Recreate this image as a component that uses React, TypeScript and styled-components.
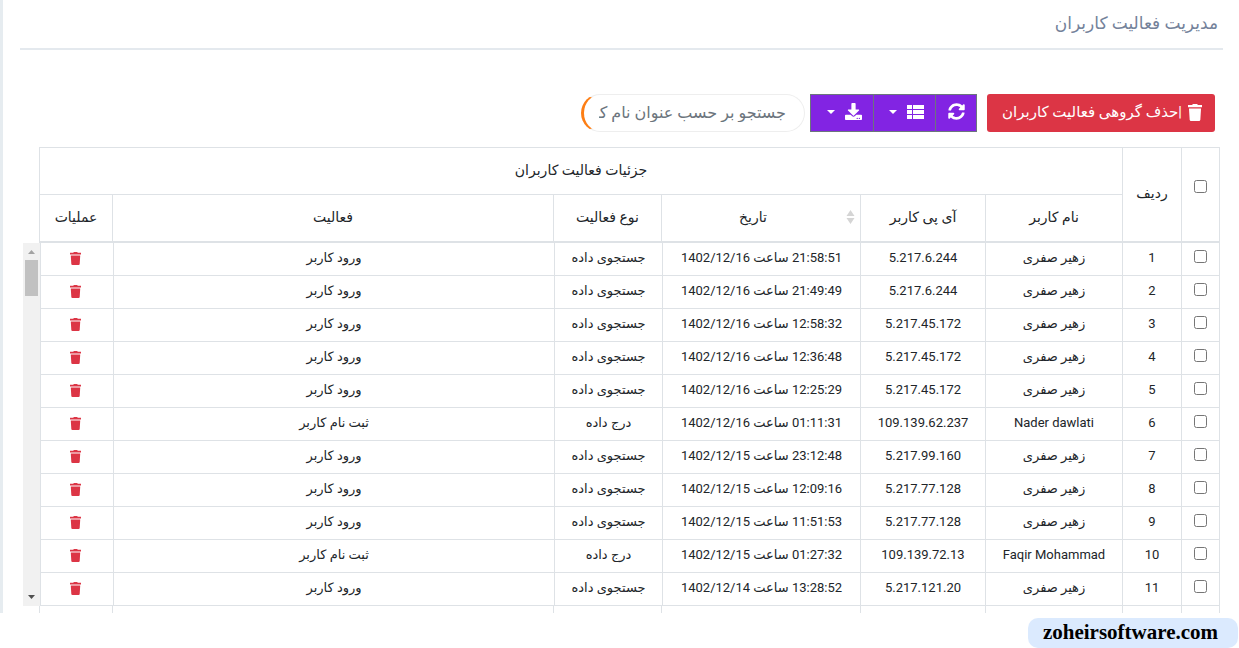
import React from 'react';
import styled, { createGlobalStyle } from 'styled-components';
import { FaDownload, FaSyncAlt } from 'react-icons/fa';

const line = '#dee2e6';
const purple = '#8224e3';

const GlobalStyle = createGlobalStyle`
  *, *::before, *::after { box-sizing: border-box; }
  body {
    margin: 0;
    background: #fff;
    color: #212529;
    font-family: Roboto, 'DejaVu Sans', sans-serif;
    font-size: 13px;
  }
`;

const Page = styled.div`
  direction: rtl;
  height: 100vh;
  display: flex;
  flex-direction: column;
`;

const Main = styled.main`
  flex: 1;
  min-height: 0;
  overflow: hidden;
  border-left: 3px solid #e6ecf0;
  padding: 0 16px 0 17px;
`;

const Title = styled.h1`
  margin: 0;
  height: 50px;
  padding-right: 5px;
  border-bottom: 2px solid #e4e9ee;
  font-size: 17px;
  line-height: 46px;
  font-weight: 400;
  color: #74829a;
`;

const Toolbar = styled.div`
  display: flex;
  align-items: center;
  margin-top: 44px;
  padding-right: 8px;
  height: 38px;
`;

const DeleteButton = styled.button`
  display: flex;
  align-items: center;
  gap: 6px;
  width: 228px;
  height: 38px;
  padding: 0 13px 2px 0;
  border: 0;
  border-radius: 3px;
  background: #dc3545;
  color: #fff;
  font: inherit;
  font-size: 15px;
  white-space: nowrap;
`;

const ButtonGroup = styled.div`
  display: flex;
  margin: 0 10px 0 5px;
  height: 38px;
  border: 1px solid #6c757d;
`;

const ToolButton = styled.button<{ $w: number }>`
  display: flex;
  align-items: center;
  justify-content: center;
  gap: 10px;
  width: ${(p) => p.$w}px;
  padding: 0 0 3px;
  border: 0;
  background: ${purple};
  color: #fff;
  font-size: 17px;
  & + & {
    padding-left: 4px;
    border-right: 1px solid #6c757d;
  }
`;

const Caret = styled.span`
  border: 4px solid transparent;
  border-top-color: #fff;
  border-bottom: 0;
`;

const Search = styled.input`
  width: 224px;
  height: 38px;
  padding: 0 18px 2px 15px;
  border: 1px solid #eee;
  border-left: 3px solid #fd7e14;
  border-radius: 20px;
  background: #fff;
  font: inherit;
  font-size: 16px;
  &::placeholder { color: #6c757d; opacity: 1; }
`;

const Tables = styled.div`
  margin: 15px 3px 0;
`;

const Grid = styled.table`
  width: 100%;
  table-layout: fixed;
  border-collapse: separate;
  border-spacing: 0;
  border-right: 1px solid ${line};
  text-align: center;
`;

const HeadArea = styled.div`
  margin-left: 16px;
`;

const HeadCell = styled.th<{ $last?: boolean; $check?: boolean; $sort?: boolean }>`
  position: relative;
  height: 48px;
  padding: 0 ${(p) => (p.$sort ? 16 : 0)}px ${(p) => (p.$check ? 16 : 3)}px 0;
  border-left: 1px solid ${line};
  border-bottom: ${(p) => (p.$last ? 2 : 1)}px solid ${line};
  font-size: 14px;
  font-weight: 400;
  white-space: nowrap;
  tr:first-child > & { border-top: 1px solid ${line}; }
`;

const SortMark = styled.svg`
  position: absolute;
  right: 5px;
  top: 15px;
`;

const ScrollArea = styled.div`
  display: flex;
`;

const Cell = styled.td<{ $check?: boolean }>`
  height: 33px;
  padding: 0 0 ${(p) => (p.$check ? 6 : 2)}px;
  border-left: 1px solid ${line};
  border-bottom: 1px solid ${line};
  line-height: 20px;
  white-space: nowrap;
`;

const FootCell = styled.td`
  height: 33px;
  border-left: 1px solid ${line};
`;

const Check = styled.input`
  display: block;
  width: 13px;
  height: 13px;
  margin: 0 auto;
`;

const RowDelete = styled.button`
  display: flex;
  margin: 0 auto;
  padding: 0 4px 0 0;
  border: 0;
  background: none;
  color: #dc3545;
`;

const Track = styled.div`
  display: flex;
  flex-direction: column;
  align-items: center;
  width: 17px;
  background: #f1f1f1;
`;

const TrackArrow = styled.svg`
  flex: none;
`;

const Thumb = styled.div`
  width: 13px;
  height: 36px;
  margin-bottom: auto;
  background: #c1c1c1;
`;

const Footer = styled.footer`
  display: flex;
  justify-content: flex-start;
  height: 35px;
  padding: 5px 1px 0;
`;

const SiteLink = styled.a`
  width: 210px;
  height: 30px;
  border-radius: 10px;
  background: #dbeafe;
  color: #000;
  font-family: 'Liberation Serif', serif;
  font-size: 21px;
  font-weight: 700;
  line-height: 28px;
  text-align: center;
  padding-right: 5px;
  text-decoration: none;
`;

const TrashIcon = ({ width, height }: { width: number; height: number }) => (
  <svg width={width} height={height} viewBox="0 0 14 17" preserveAspectRatio="none" fill="currentColor">
    <path d="M4.500 0h5v1H14v2.200H0V1h4.500z" />
    <path d="M1 4.500h12l-.7 11.200q-.1 1.300-1.300 1.300H3q-1.200 0-1.300-1.300z" />
  </svg>
);

const ListIcon = () => (
  <svg width="17" height="14" viewBox="0 0 17 14" fill="currentColor">
    <path d="M0 0h5v4H0zM6 0h11v4H6zM0 5h5v4H0zM6 5h11v4H6zM0 10h5v4H0zM6 10h11v4H6z" />
  </svg>
);

const people = 'زهیر صفری';
const login = 'ورود کاربر';
const signup = 'ثبت نام کاربر';
const lookup = 'جستجوی داده';
const insert = 'درج داده';

const rows = [
  [people, '5.217.6.244', '1402/12/16', '21:58:51', lookup, login],
  [people, '5.217.6.244', '1402/12/16', '21:49:49', lookup, login],
  [people, '5.217.45.172', '1402/12/16', '12:58:32', lookup, login],
  [people, '5.217.45.172', '1402/12/16', '12:36:48', lookup, login],
  [people, '5.217.45.172', '1402/12/16', '12:25:29', lookup, login],
  ['Nader dawlati', '109.139.62.237', '1402/12/16', '01:11:31', insert, signup],
  [people, '5.217.99.160', '1402/12/15', '23:12:48', lookup, login],
  [people, '5.217.77.128', '1402/12/15', '12:09:16', lookup, login],
  [people, '5.217.77.128', '1402/12/15', '11:51:53', lookup, login],
  ['Faqir Mohammad', '109.139.72.13', '1402/12/15', '01:27:32', insert, signup],
  [people, '5.217.121.20', '1402/12/14', '13:28:52', lookup, login],
];

const Col = styled.col<{ $w?: number }>`
  width: ${(p) => (p.$w ? `${p.$w}px` : 'auto')};
`;

const Columns = ({ date }: { date: number }) => (
  <colgroup>
    <Col $w={38} />
    <Col $w={59} />
    <Col $w={137} />
    <Col $w={125} />
    <Col $w={date} />
    <Col $w={108} />
    <Col />
    <Col $w={73} />
  </colgroup>
);

export default function App() {
  return (
    <Page lang="fa">
      <GlobalStyle />
      <Main>
        <Title>مدیریت فعالیت کاربران</Title>
        <Toolbar>
          <DeleteButton type="button">
            <TrashIcon width={14} height={17} />
            <span>|حذف گروهی فعالیت کاربران</span>
          </DeleteButton>
          <ButtonGroup>
            <ToolButton type="button" $w={40} aria-label="بازخوانی"><FaSyncAlt /></ToolButton>
            <ToolButton type="button" $w={62} aria-label="ستون‌ها"><ListIcon /><Caret /></ToolButton>
            <ToolButton type="button" $w={63} aria-label="خروجی"><FaDownload /><Caret /></ToolButton>
          </ButtonGroup>
          <Search type="text" aria-label="جستجو" placeholder="جستجو بر حسب عنوان نام کاربر" />
        </Toolbar>
        <Tables>
          <HeadArea>
            <Grid>
              <Columns date={199} />
              <thead>
                <tr>
                  <HeadCell rowSpan={2} $last $check><Check type="checkbox" aria-label="انتخاب همه" /></HeadCell>
                  <HeadCell rowSpan={2} $last>ردیف</HeadCell>
                  <HeadCell colSpan={6}>جزئیات فعالیت کاربران</HeadCell>
                </tr>
                <tr>
                  <HeadCell $last>نام کاربر</HeadCell>
                  <HeadCell $last>آی پی کاربر</HeadCell>
                  <HeadCell $last $sort>
                    تاریخ
                    <SortMark width="9" height="14" viewBox="0 0 9 14" fill="#d5d5d5">
                      <path d="M4.500 0 8.500 6H.5zM4.500 14 .5 8h8z" />
                    </SortMark>
                  </HeadCell>
                  <HeadCell $last>نوع فعالیت</HeadCell>
                  <HeadCell $last>فعالیت</HeadCell>
                  <HeadCell $last>عملیات</HeadCell>
                </tr>
              </thead>
            </Grid>
          </HeadArea>
          <ScrollArea>
            <Grid>
              <Columns date={198} />
              <tbody>
                {rows.map(([name, ip, day, time, kind, activity], i) => (
                  <tr key={i}>
                    <Cell $check><Check type="checkbox" aria-label={`ردیف ${i + 1}`} /></Cell>
                    <Cell>{i + 1}</Cell>
                    <Cell>{name}</Cell>
                    <Cell>{ip}</Cell>
                    <Cell>{time} ساعت {day}</Cell>
                    <Cell>{kind}</Cell>
                    <Cell>{activity}</Cell>
                    <Cell><RowDelete type="button" aria-label="حذف"><TrashIcon width={11} height={13} /></RowDelete></Cell>
                  </tr>
                ))}
              </tbody>
            </Grid>
            <Track>
              <TrackArrow width="17" height="17" viewBox="0 0 17 17" fill="#a3a3a3"><path d="M5 11 8.500 7 12 11z" /></TrackArrow>
              <Thumb />
              <TrackArrow width="17" height="17" viewBox="0 0 17 17" fill="#505050"><path d="M5 6 8.500 10 12 6z" /></TrackArrow>
            </Track>
          </ScrollArea>
          <HeadArea>
            <Grid>
              <Columns date={199} />
              <tfoot>
                <tr>
                  {[0, 1, 2, 3, 4, 5, 6, 7].map((n) => <FootCell key={n} />)}
                </tr>
              </tfoot>
            </Grid>
          </HeadArea>
        </Tables>
      </Main>
      <Footer>
        <SiteLink href="#" dir="ltr">zoheirsoftware.com</SiteLink>
      </Footer>
    </Page>
  );
}
